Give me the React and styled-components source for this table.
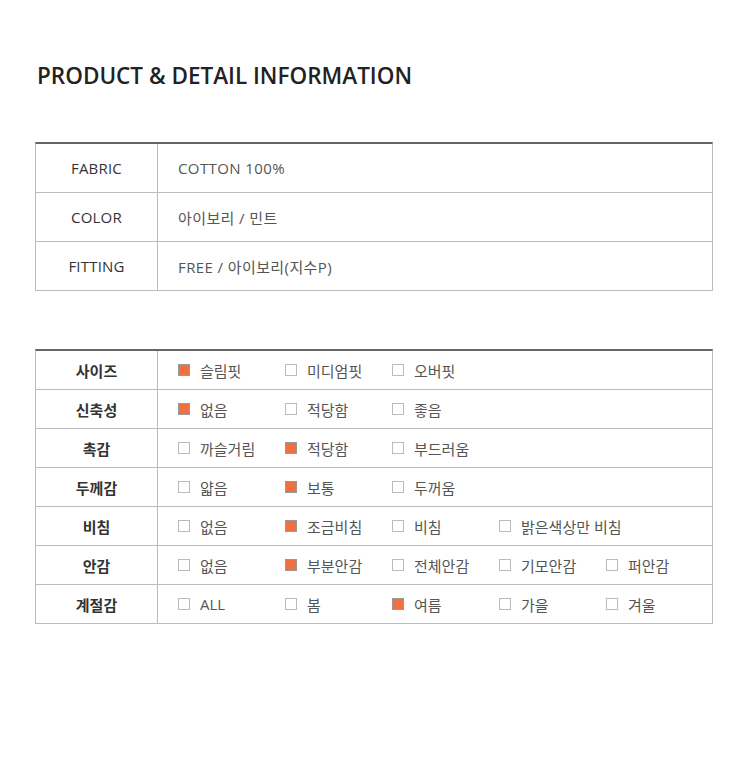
import React from 'react';
import styled, { createGlobalStyle } from 'styled-components';

const GlobalStyle = createGlobalStyle`
  body {
    margin: 0;
    background: #fff;
    font-family: "Open Sans", "Noto Sans CJK KR", sans-serif;
  }
`;

const basics = [
  { label: 'FABRIC', value: 'COTTON 100%' },
  { label: 'COLOR', value: '아이보리 / 민트' },
  { label: 'FITTING', value: 'FREE / 아이보리(지수P)' },
];

const details = [
  { label: '사이즈', options: ['슬림핏', '미디엄핏', '오버핏'], checked: [0] },
  { label: '신축성', options: ['없음', '적당함', '좋음'], checked: [0] },
  { label: '촉감', options: ['까슬거림', '적당함', '부드러움'], checked: [1] },
  { label: '두께감', options: ['얇음', '보통', '두꺼움'], checked: [1] },
  { label: '비침', options: ['없음', '조금비침', '비침', '밝은색상만 비침'], checked: [1] },
  { label: '안감', options: ['없음', '부분안감', '전체안감', '기모안감', '퍼안감'], checked: [1] },
  { label: '계절감', options: ['ALL', '봄', '여름', '가을', '겨울'], checked: [2] },
];

export default function App() {
  return (
    <Page>
      <GlobalStyle />
      <Title>PRODUCT &amp; DETAIL INFORMATION</Title>
      <Table>
        {basics.map((row) => (
          <Row key={row.label} $height={48}>
            <Label>{row.label}</Label>
            <Value>{row.value}</Value>
          </Row>
        ))}
      </Table>
      <Table $spaced>
        {details.map((row) => (
          <Row key={row.label} $height={38}>
            <Label $strong>{row.label}</Label>
            <Options>
              {row.options.map((opt, i) => (
                <Option key={opt}>
                  <Check $on={row.checked.includes(i)} />
                  {opt}
                </Option>
              ))}
            </Options>
          </Row>
        ))}
      </Table>
    </Page>
  );
}

const Page = styled.div`
  padding: 62px 37px 60px 35px;
  width: 678px;
`;

const Title = styled.h1`
  margin: 0 0 0 2px;
  font-size: 22.5px;
  font-weight: 600;
  color: #222;
  line-height: 28px;
  letter-spacing: 0;
`;

const Table = styled.div`
  margin-top: ${(p) => (p.$spaced ? '58px' : '52px')};
  border-top: 2px solid #666;
  border-left: 1px solid #bbb;
  border-right: 1px solid #bbb;
`;

const Row = styled.div`
  display: flex;
  height: ${(p) => p.$height}px;
  border-bottom: 1px solid #bbb;
`;

const Label = styled.div`
  width: 121px;
  flex-shrink: 0;
  border-right: 1px solid #bbb;
  display: flex;
  align-items: center;
  justify-content: center;
  font-size: 15px;
  color: #333;
  letter-spacing: ${(p) => (p.$strong ? '0' : '0.2px')};
  font-weight: ${(p) => (p.$strong ? 700 : 400)};
  font-family: ${(p) => (p.$strong ? '"Noto Sans CJK KR", sans-serif' : '"Open Sans", "Noto Sans CJK KR", sans-serif')};
`;

const Value = styled.div`
  display: flex;
  align-items: center;
  padding-left: 20px;
  font-size: 15px;
  letter-spacing: 0.4px;
  color: #555;
`;

const Options = styled.div`
  display: grid;
  grid-template-columns: repeat(5, 107px);
  align-items: center;
  padding-left: 20px;
`;

const Option = styled.div`
  display: flex;
  align-items: center;
  gap: 10px;
  font-size: 15px;
  color: #555;
  font-family: "Open Sans", "Noto Sans CJK KR", sans-serif;
  white-space: nowrap;
`;

const Check = styled.span`
  width: 10px;
  height: 10px;
  flex-shrink: 0;
  border: 1px solid ${(p) => (p.$on ? '#999' : '#bbb')};
  background: ${(p) => (p.$on ? '#f07040' : '#fff')};
`;
